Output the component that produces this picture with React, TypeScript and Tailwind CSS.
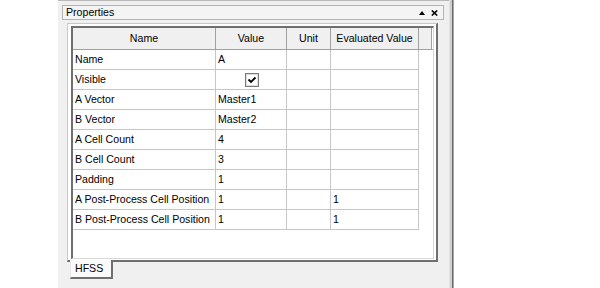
type Row = { name: string; value: string; unit: string; evaluated: string; check?: boolean };

const rows: Row[] = [
  { name: "Name", value: "A", unit: "", evaluated: "" },
  { name: "Visible", value: "", unit: "", evaluated: "", check: true },
  { name: "A Vector", value: "Master1", unit: "", evaluated: "" },
  { name: "B Vector", value: "Master2", unit: "", evaluated: "" },
  { name: "A Cell Count", value: "4", unit: "", evaluated: "" },
  { name: "B Cell Count", value: "3", unit: "", evaluated: "" },
  { name: "Padding", value: "1", unit: "", evaluated: "" },
  { name: "A Post-Process Cell Position", value: "1", unit: "", evaluated: "1" },
  { name: "B Post-Process Cell Position", value: "1", unit: "", evaluated: "1" },
];

const CheckBox = () => (
  <svg width="14" height="14" viewBox="0 0 14 14">
    <rect x="0.5" y="0.5" width="13" height="13" fill="#ffffff" stroke="#7a7a7a" />
    <rect x="1.5" y="1.5" width="11" height="11" fill="none" stroke="#dcdcdc" />
    <path d="M3.5 6.5 L6 9 L10.5 4.5" fill="none" stroke="#000000" strokeWidth="1.8" />
  </svg>
);

const HeaderCell = ({ w, label }: { w: string; label: string }) => (
  <div className={`${w} h-full flex items-center justify-center border-r border-[#a0a0a0] bg-[#f0f0f0]`}>
    {label}
  </div>
);

export default function App() {
  return (
    <div
      className="w-[600px] h-[288px] bg-white flex text-black overflow-hidden"
      style={{ fontFamily: '"Liberation Sans", Arial, sans-serif' }}
    >
      <div className="w-[58px] shrink-0" />

      {/* docked properties panel */}
      <div className="w-[391px] shrink-0 h-full bg-[#f0f0f0] border-t border-[#b8b8b8] flex flex-col text-[10.6px]">
        {/* title bar */}
        <div className="mt-[4px] ml-[4px] w-[382px] h-[15px] border border-[#b4b4b4] bg-[#f4f4f4] flex items-center pl-[3px] pr-[5px]">
          <span className="leading-none">Properties</span>
          <div className="ml-auto flex items-center gap-[6px]">
            <svg width="6" height="4" viewBox="0 0 6 4">
              <path d="M0 4 L3 0 L6 4 Z" fill="#000" />
            </svg>
            <svg width="7" height="6" viewBox="0 0 7 6">
              <path d="M0.8 0.5 L6.2 5.5 M6.2 0.5 L0.8 5.5" stroke="#000" strokeWidth="1.6" />
            </svg>
          </div>
        </div>

        {/* grid frame */}
        <div className="mt-[3px] ml-[9px] w-[371px] h-[239px] bg-white border-t border-l border-[#c8c8c8] border-r-2 border-b-2 border-r-[#6f6f6f] border-b-[#6f6f6f] pl-[3px] pt-[2px] pr-[2px] pb-[1px] flex flex-col">
          <div className="flex-1 border-t-2 border-l-2 border-[#6f6f6f] border-r border-b border-r-[#d8d8d8] border-b-[#d8d8d8] bg-white">
            {/* header */}
            <div className="flex h-[22px] border-b border-[#a0a0a0]">
              <HeaderCell w="w-[143px]" label="Name" />
              <HeaderCell w="w-[71px]" label="Value" />
              <HeaderCell w="w-[44px]" label="Unit" />
              <HeaderCell w="w-[88px]" label="Evaluated Value" />
              <HeaderCell w="w-[13px]" label="" />
            </div>
            {rows.map((r) => (
              <div key={r.name} className="flex h-[20px] w-[346px] border-b border-[#c6c6c6]">
                <div className="w-[143px] border-r border-[#c6c6c6] flex items-center pl-[2px]">{r.name}</div>
                <div className="w-[71px] border-r border-[#c6c6c6] flex items-center pl-[2px]">
                  {r.check ? (
                    <div className="w-full flex justify-center pr-[1px]">
                      <CheckBox />
                    </div>
                  ) : (
                    r.value
                  )}
                </div>
                <div className="w-[44px] border-r border-[#c6c6c6] flex items-center pl-[2px]">{r.unit}</div>
                <div className="w-[88px] border-r border-[#c6c6c6] flex items-center pl-[2px]">{r.evaluated}</div>
              </div>
            ))}
          </div>
        </div>

        {/* tab strip */}
        <div className="ml-[12px] -mt-[2px] w-[43px] h-[19px] bg-[#fafafa] border-l border-[#e8e8e8] border-r-2 border-b-2 border-r-[#6f6f6f] border-b-[#6f6f6f] flex items-center pl-[4px]">
          HFSS
        </div>
      </div>

      {/* splitter edge */}
      <div className="w-[1px] h-full bg-[#e2e2e2]" />
      <div className="w-[2px] h-full bg-[#d0d0d0]" />
      <div className="w-[1px] h-full bg-[#6a6a6a]" />
      <div className="w-[1px] h-full bg-[#a8a8a8]" />
      <div className="flex-1 h-full bg-white" />
    </div>
  );
}
